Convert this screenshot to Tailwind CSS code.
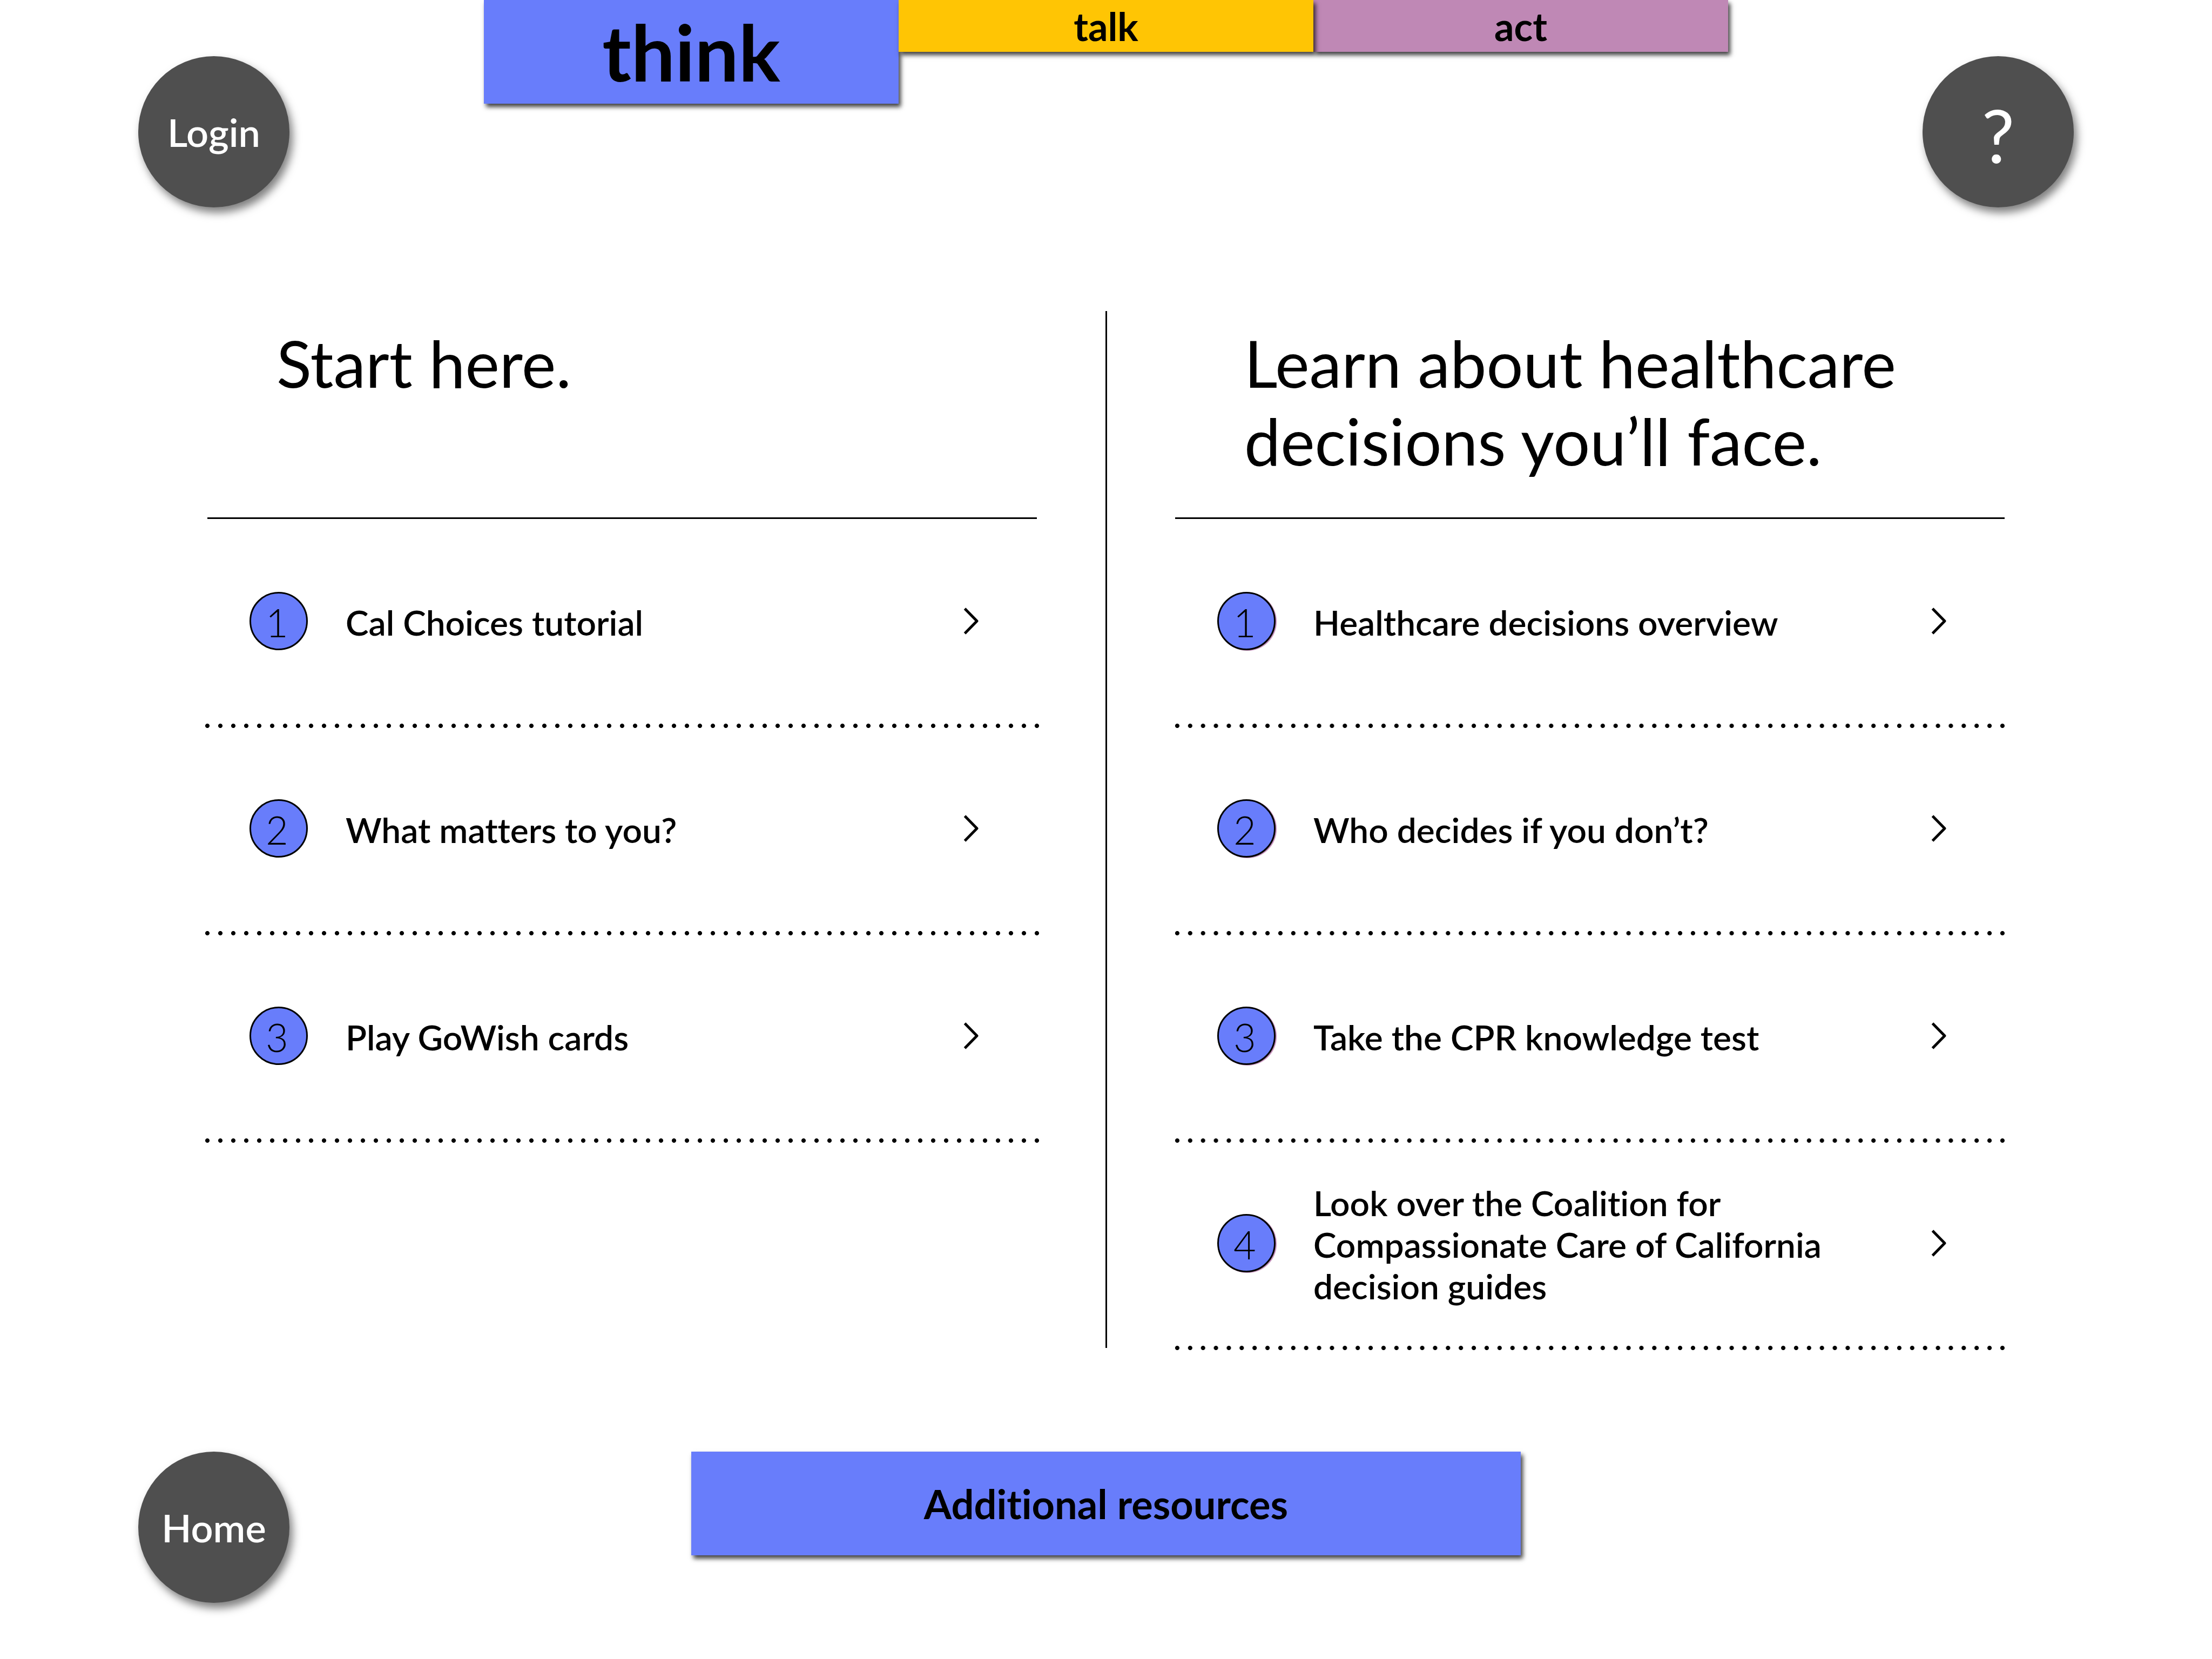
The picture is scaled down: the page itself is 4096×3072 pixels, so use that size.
<!DOCTYPE html>
<html lang="en">
<head>
<meta charset="utf-8">
<meta name="viewport" content="width=device-width, initial-scale=1">
<title>Cal Choices – Think</title>
<script src="https://cdn.jsdelivr.net/npm/@tailwindcss/browser@4"></script>
</head>
<body class="bg-white text-black font-['Lato',sans-serif] [font-variant-ligatures:none]">

  <header class="flex min-h-[576px] items-start justify-between px-64">
    <button type="button" class="mt-[104px] flex size-[280px] shrink-0 items-center justify-center rounded-full bg-[#4f4f4f] text-[72px] font-semibold text-white shadow-[6px_10px_16px_rgba(0,0,0,0.5)]">Login</button>

    <nav class="grid w-[56.25vw] grid-cols-3 items-start font-bold">
      <a href="#think" aria-current="page" class="relative z-10 flex h-48 items-center justify-center bg-[#687dfb] text-[144px] shadow-[4px_6px_8px_rgba(0,0,0,0.75)]">think</a>
      <a href="#talk" class="relative z-20 flex h-24 items-center justify-center bg-[#ffc504] text-[72px] shadow-[4px_6px_8px_rgba(0,0,0,0.75)]">talk</a>
      <a href="#act" class="flex h-24 items-center justify-center bg-[#bf88b5] text-[72px] shadow-[4px_6px_8px_rgba(0,0,0,0.75)]">act</a>
    </nav>

    <button type="button" aria-label="Help" class="mt-[104px] flex size-[280px] shrink-0 items-center justify-center rounded-full bg-[#4f4f4f] pt-3 text-[136px] text-white shadow-[6px_10px_16px_rgba(0,0,0,0.5)]">?</button>
  </header>

  <main class="flex px-96">
    <section class="flex-1">
      <h2 class="min-h-96 px-32 pt-6 text-[120px] leading-[144px]">Start here.</h2>
      <hr class="-mt-0.5 -mb-px h-[3px] border-0 bg-black">
      <ol>
        <li>
          <a href="#tutorial" class="flex min-h-96 items-center pr-[108px] pl-[78px]">
            <span class="mr-[70px] mb-1 flex size-[108px] shrink-0 items-center justify-center rounded-full border-3 border-black bg-[#687dfb] pt-1 pr-1.5 text-[72px] font-light">1</span>
            <span class="flex-1 text-[64px] leading-[77px] font-semibold">Cal Choices tutorial</span>
            <svg class="mb-1 h-[50px] w-7 shrink-0" viewBox="0 0 28 50" fill="none" stroke="#000" stroke-width="5" stroke-linejoin="round" aria-hidden="true"><path d="M2.5 2 L25 25 L2.5 48"/></svg>
          </a>
          <div class="-mx-3 -my-1 h-2 bg-[radial-gradient(circle,#000_3.6px,transparent_4.4px)] bg-[length:24px_8px] bg-repeat-round"></div>
        </li>
        <li>
          <a href="#values" class="flex min-h-96 items-center pr-[108px] pl-[78px]">
            <span class="mr-[70px] mb-1 flex size-[108px] shrink-0 items-center justify-center rounded-full border-3 border-black bg-[#687dfb] pt-1 pr-1.5 text-[72px] font-light">2</span>
            <span class="flex-1 text-[64px] leading-[77px] font-semibold">What matters to you?</span>
            <svg class="mb-1 h-[50px] w-7 shrink-0" viewBox="0 0 28 50" fill="none" stroke="#000" stroke-width="5" stroke-linejoin="round" aria-hidden="true"><path d="M2.5 2 L25 25 L2.5 48"/></svg>
          </a>
          <div class="-mx-3 -my-1 h-2 bg-[radial-gradient(circle,#000_3.6px,transparent_4.4px)] bg-[length:24px_8px] bg-repeat-round"></div>
        </li>
        <li>
          <a href="#gowish" class="flex min-h-96 items-center pr-[108px] pl-[78px]">
            <span class="mr-[70px] mb-1 flex size-[108px] shrink-0 items-center justify-center rounded-full border-3 border-black bg-[#687dfb] pt-1 pr-1.5 text-[72px] font-light">3</span>
            <span class="flex-1 text-[64px] leading-[77px] font-semibold">Play GoWish cards</span>
            <svg class="mb-1 h-[50px] w-7 shrink-0" viewBox="0 0 28 50" fill="none" stroke="#000" stroke-width="5" stroke-linejoin="round" aria-hidden="true"><path d="M2.5 2 L25 25 L2.5 48"/></svg>
          </a>
          <div class="-mx-3 -my-1 h-2 bg-[radial-gradient(circle,#000_3.6px,transparent_4.4px)] bg-[length:24px_8px] bg-repeat-round"></div>
        </li>
      </ol>
    </section>

    <div class="flex w-64 shrink-0 justify-center" aria-hidden="true">
      <div class="w-[3px] bg-black"></div>
    </div>

    <section class="flex-1">
      <h2 class="min-h-96 px-32 pt-6 text-[120px] leading-[144px]">Learn about healthcare decisions you’ll face.</h2>
      <hr class="-mt-0.5 -mb-px h-[3px] border-0 bg-black">
      <ol>
        <li>
          <a href="#overview" class="flex min-h-96 items-center pr-[108px] pl-[78px]">
            <span class="mr-[70px] mb-1 flex size-[108px] shrink-0 items-center justify-center rounded-full border-3 border-black bg-[#687dfb] pt-1 pr-1.5 text-[72px] font-light shadow-[2px_1px_1px_#bf88b5]">1</span>
            <span class="flex-1 text-[64px] leading-[77px] font-semibold">Healthcare decisions overview</span>
            <svg class="mb-1 h-[50px] w-7 shrink-0" viewBox="0 0 28 50" fill="none" stroke="#000" stroke-width="5" stroke-linejoin="round" aria-hidden="true"><path d="M2.5 2 L25 25 L2.5 48"/></svg>
          </a>
          <div class="-mx-2 -my-1 h-2 bg-[radial-gradient(circle,#000_3.6px,transparent_4.4px)] bg-[length:24px_8px] bg-repeat-round"></div>
        </li>
        <li>
          <a href="#who-decides" class="flex min-h-96 items-center pr-[108px] pl-[78px]">
            <span class="mr-[70px] mb-1 flex size-[108px] shrink-0 items-center justify-center rounded-full border-3 border-black bg-[#687dfb] pt-1 pr-1.5 text-[72px] font-light shadow-[2px_1px_1px_#bf88b5]">2</span>
            <span class="flex-1 text-[64px] leading-[77px] font-semibold">Who decides if you don’t?</span>
            <svg class="mb-1 h-[50px] w-7 shrink-0" viewBox="0 0 28 50" fill="none" stroke="#000" stroke-width="5" stroke-linejoin="round" aria-hidden="true"><path d="M2.5 2 L25 25 L2.5 48"/></svg>
          </a>
          <div class="-mx-2 -my-1 h-2 bg-[radial-gradient(circle,#000_3.6px,transparent_4.4px)] bg-[length:24px_8px] bg-repeat-round"></div>
        </li>
        <li>
          <a href="#cpr-test" class="flex min-h-96 items-center pr-[108px] pl-[78px]">
            <span class="mr-[70px] mb-1 flex size-[108px] shrink-0 items-center justify-center rounded-full border-3 border-black bg-[#687dfb] pt-1 pr-1.5 text-[72px] font-light shadow-[2px_1px_1px_#bf88b5]">3</span>
            <span class="flex-1 text-[64px] leading-[77px] font-semibold">Take the CPR knowledge test</span>
            <svg class="mb-1 h-[50px] w-7 shrink-0" viewBox="0 0 28 50" fill="none" stroke="#000" stroke-width="5" stroke-linejoin="round" aria-hidden="true"><path d="M2.5 2 L25 25 L2.5 48"/></svg>
          </a>
          <div class="-mx-2 -my-1 h-2 bg-[radial-gradient(circle,#000_3.6px,transparent_4.4px)] bg-[length:24px_8px] bg-repeat-round"></div>
        </li>
        <li>
          <a href="#decision-guides" class="flex min-h-96 items-center pr-[108px] pl-[78px]">
            <span class="mr-[70px] mb-1 flex size-[108px] shrink-0 items-center justify-center rounded-full border-3 border-black bg-[#687dfb] pt-1 pr-1.5 text-[72px] font-light shadow-[2px_1px_1px_#bf88b5]">4</span>
            <span class="flex-1 text-[64px] leading-[77px] font-semibold">Look over the Coalition for<br>Compassionate Care of California<br>decision guides</span>
            <svg class="mb-1 h-[50px] w-7 shrink-0" viewBox="0 0 28 50" fill="none" stroke="#000" stroke-width="5" stroke-linejoin="round" aria-hidden="true"><path d="M2.5 2 L25 25 L2.5 48"/></svg>
          </a>
          <div class="-mx-2 -my-1 h-2 bg-[radial-gradient(circle,#000_3.6px,transparent_4.4px)] bg-[length:24px_8px] bg-repeat-round"></div>
        </li>
      </ol>
    </section>
  </main>

  <footer class="grid grid-cols-[280px_1fr_280px] items-start px-64 pt-48 pb-[104px]">
    <a href="#home" class="flex size-[280px] items-center justify-center rounded-full bg-[#4f4f4f] text-[72px] font-semibold text-white shadow-[6px_10px_16px_rgba(0,0,0,0.5)]">Home</a>
    <button type="button" class="h-48 w-[37.5vw] justify-self-center bg-[#687dfb] text-[74px] font-bold shadow-[4px_6px_8px_rgba(0,0,0,0.75)]">Additional resources</button>
  </footer>

</body>
</html>
